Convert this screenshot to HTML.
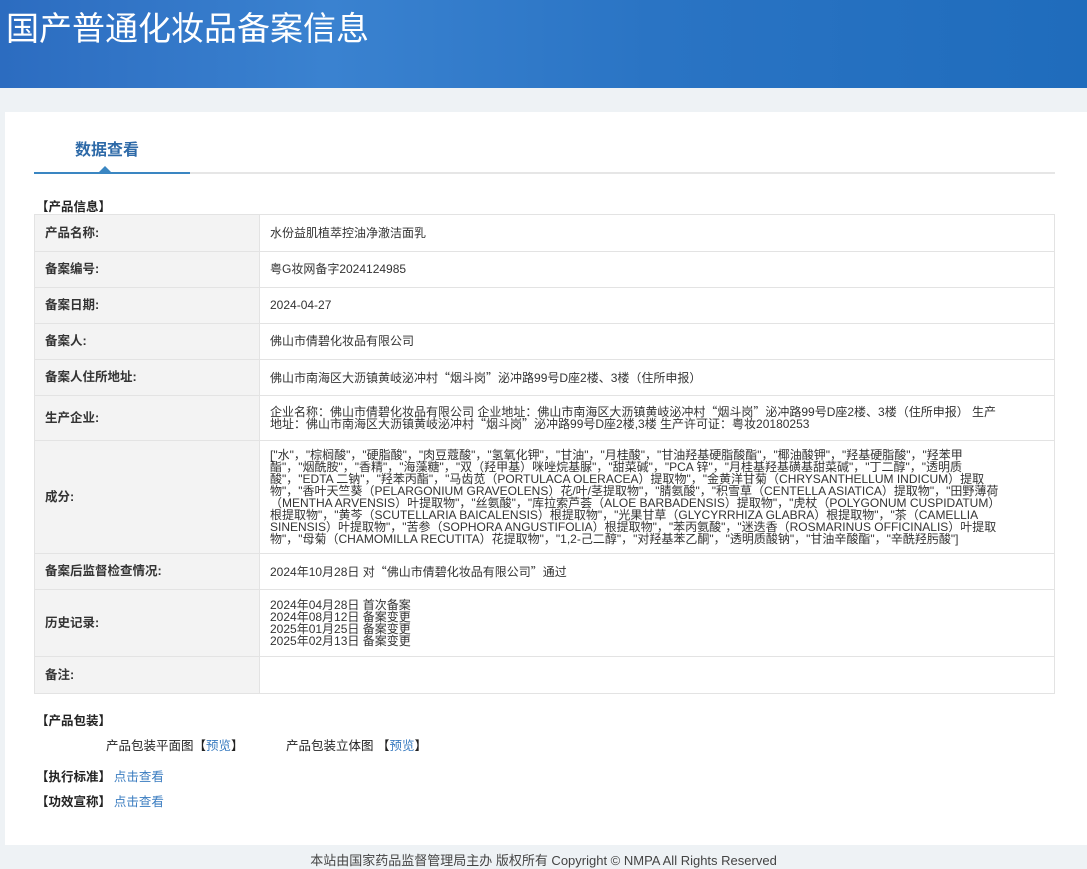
<!DOCTYPE html>
<html><head><meta charset="utf-8"><style>
*{margin:0;padding:0;box-sizing:border-box}
body{width:1087px;height:869px;background:#eef2f5;font-family:"Liberation Sans","Noto Sans CJK SC",sans-serif;color:#333;position:relative;overflow:hidden}
.hdr{position:absolute;left:0;top:0;width:1087px;height:88px;background:linear-gradient(90deg,#2c6cc0 0%,#3a82d0 30%,#2a74c4 60%,#1f6cbc 100%)}
.hdr h1{position:absolute;left:6px;top:2px;font-size:33px;font-weight:normal;color:#fff;font-family:"Noto Sans CJK SC",sans-serif}
.panel{position:absolute;left:5px;top:112px;width:1082px;height:733px;background:#fff}
.tab{position:absolute;left:75px;top:136px;font-size:16px;font-weight:bold;color:#2e6aa8;font-family:"Noto Sans CJK SC",sans-serif}
.line{position:absolute;left:34px;top:172px;width:1021px;height:2px;background:#e6e6e6}
.line2{position:absolute;left:34px;top:172px;width:156px;height:2px;background:#3a86c2}
.tri{position:absolute;left:99px;top:166px;width:0;height:0;border-left:6px solid transparent;border-right:6px solid transparent;border-bottom:6px solid #3a86c2}
.sec{position:absolute;font-size:12.5px;font-weight:bold;color:#222;font-family:"Noto Sans CJK SC",sans-serif}
table{position:absolute;left:34px;top:214px;width:1021px;border-collapse:collapse;border:1px solid #a9c0d8;font-size:12px}
td{border:1px solid #e3e3e3;vertical-align:middle;line-height:11px}
td.l{width:225px;background:#f3f3f3;font-weight:bold;font-size:12.5px;padding-left:10px;color:#333}
td.v{padding-left:10px;color:#333}
.q{font-family:"Noto Sans CJK SC",sans-serif}
a{color:#3a7cc0;text-decoration:none}
.s{position:absolute;font-size:12.5px;color:#222}
.foot{position:absolute;left:0;width:1087px;top:850px;text-align:center;font-size:13px;color:#444}
</style></head><body>
<div class="hdr"><h1>国产普通化妆品备案信息</h1></div>
<div class="panel"></div>
<div class="tab">数据查看</div>
<div class="line"></div><div class="line2"></div><div class="tri"></div>
<div class="sec" style="left:36px;top:196px">【产品信息】</div>
<table>
<tr style="height:37px"><td class="l">产品名称:</td><td class="v">水份益肌植萃控油净澈洁面乳</td></tr>
<tr style="height:36px"><td class="l">备案编号:</td><td class="v">粤G妆网备字2024124985</td></tr>
<tr style="height:36px"><td class="l">备案日期:</td><td class="v">2024-04-27</td></tr>
<tr style="height:36px"><td class="l">备案人:</td><td class="v">佛山市倩碧化妆品有限公司</td></tr>
<tr style="height:36px"><td class="l">备案人住所地址:</td><td class="v">佛山市南海区大沥镇黄岐泌冲村<span class="q">“烟斗岗”</span>泌冲路99号D座2楼、3楼（住所申报）</td></tr>
<tr style="height:45px"><td class="l">生产企业:</td><td class="v" style="white-space:nowrap">企业名称：佛山市倩碧化妆品有限公司 企业地址：佛山市南海区大沥镇黄岐泌冲村<span class="q">“烟斗岗”</span>泌冲路99号D座2楼、3楼（住所申报） 生产<br>地址：佛山市南海区大沥镇黄岐泌冲村<span class="q">“烟斗岗”</span>泌冲路99号D座2楼,3楼 生产许可证：粤妆20180253</td></tr>
<tr style="height:113px"><td class="l">成分:</td><td class="v" style="line-height:12px;white-space:nowrap">["水"，"棕榈酸"，"硬脂酸"，"肉豆蔻酸"，"氢氧化钾"，"甘油"，"月桂酸"，"甘油羟基硬脂酸酯"，"椰油酸钾"，"羟基硬脂酸"，"羟苯甲<br>酯"，"烟酰胺"，"香精"，"海藻糖"，"双（羟甲基）咪唑烷基脲"，"甜菜碱"，"PCA 锌"，"月桂基羟基磺基甜菜碱"，"丁二醇"，"透明质<br>酸"，"EDTA 二钠"，"羟苯丙酯"，"马齿苋（PORTULACA OLERACEA）提取物"，"金黄洋甘菊（CHRYSANTHELLUM INDICUM）提取<br>物"，"香叶天竺葵（PELARGONIUM GRAVEOLENS）花/叶/茎提取物"，"腈氨酸"，"积雪草（CENTELLA ASIATICA）提取物"，"田野薄荷<br>（MENTHA ARVENSIS）叶提取物"，"丝氨酸"，"库拉索芦荟（ALOE BARBADENSIS）提取物"，"虎杖（POLYGONUM CUSPIDATUM）<br>根提取物"，"黄芩（SCUTELLARIA BAICALENSIS）根提取物"，"光果甘草（GLYCYRRHIZA GLABRA）根提取物"，"茶（CAMELLIA<br>SINENSIS）叶提取物"，"苦参（SOPHORA ANGUSTIFOLIA）根提取物"，"苯丙氨酸"，"迷迭香（ROSMARINUS OFFICINALIS）叶提取<br>物"，"母菊（CHAMOMILLA RECUTITA）花提取物"，"1,2-己二醇"，"对羟基苯乙酮"，"透明质酸钠"，"甘油辛酸酯"，"辛酰羟肟酸"]</td></tr>
<tr style="height:36px"><td class="l">备案后监督检查情况:</td><td class="v">2024年10月28日 对<span class="q">“佛山市倩碧化妆品有限公司”</span>通过</td></tr>
<tr style="height:67px"><td class="l">历史记录:</td><td class="v" style="line-height:12px">2024年04月28日 首次备案<br>2024年08月12日 备案变更<br>2025年01月25日 备案变更<br>2025年02月13日 备案变更</td></tr>
<tr style="height:37px"><td class="l">备注:</td><td class="v"></td></tr>
</table>
<div class="sec" style="left:36px;top:710px">【产品包装】</div>
<div class="s" style="left:106px;top:735px">产品包装平面图【<a>预览</a>】</div>
<div class="s" style="left:286px;top:735px">产品包装立体图 【<a>预览</a>】</div>
<div class="sec" style="left:36px;top:766px">【执行标准】 <a style="font-weight:normal">点击查看</a></div>
<div class="sec" style="left:36px;top:791px">【功效宣称】 <a style="font-weight:normal">点击查看</a></div>
<div class="foot">本站由国家药品监督管理局主办 版权所有 Copyright © NMPA All Rights Reserved</div>
</body></html>
